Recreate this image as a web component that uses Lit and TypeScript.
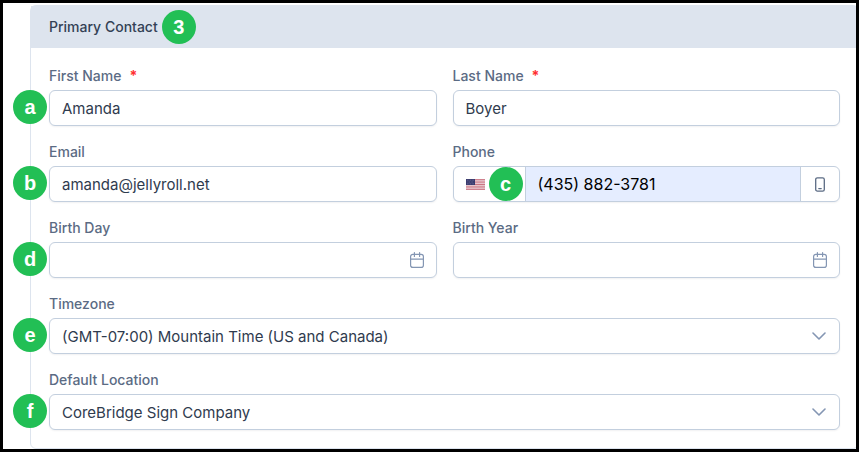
import { LitElement, html, css, svg, nothing } from "lit";
import { customElement, property } from "lit/decorators.js";

const chevron = svg`<svg class="chevron" width="14" height="8" viewBox="0 0 14 8" fill="none" stroke="currentColor" stroke-width="1.6" stroke-linecap="round" stroke-linejoin="round" aria-hidden="true"><path d="M1 1l6 6 6-6"/></svg>`;

const calendar = svg`<svg width="14" height="16" viewBox="0 0 14 16" fill="none" stroke="currentColor" stroke-width="1.2" stroke-linecap="round" aria-hidden="true"><rect x=".6" y="2.3" width="12.8" height="13.1" rx="2.2"/><path d="M.8 7.2h12.4M4.4.6v3.8M9.6.6v3.8"/></svg>`;

const mobile = svg`<svg width="10" height="15" viewBox="0 0 10 15" fill="none" stroke="currentColor" stroke-width="1.3" stroke-linecap="round" aria-hidden="true"><rect x=".7" y=".8" width="8.6" height="13.3" rx="1.7"/><path d="M3.8 11.6h2.4"/></svg>`;

const flag = svg`<svg width="19" height="11" viewBox="0 0 19 11" role="img" aria-label="United States"><rect width="19" height="11" fill="#f3e9ec"/><path d="M0 .4h19M0 2.1h19M0 3.8h19M0 5.5h19M0 7.2h19M0 8.9h19M0 10.6h19" stroke="#c4606f" stroke-width=".85"/><rect width="9" height="6" fill="#3a3b6e"/><path d="M1 1.2h7M1.6 3h6M1 4.8h7" stroke="#8f90b4" stroke-width=".6" stroke-dasharray=".7 .9"/></svg>`;

@customElement("step-badge")
export class StepBadge extends LitElement {
  static styles = css`
    :host {
      display: inline-flex;
      align-items: center;
      justify-content: center;
      width: 34px;
      height: 34px;
      border-radius: 50%;
      background: #22bf55;
      color: #fff;
      font: 700 20px/34px "Liberation Sans", Arial, sans-serif;
    }
  `;
  render() {
    return html`<slot></slot>`;
  }
}

@customElement("form-field")
export class FormField extends LitElement {
  @property() label = "";
  @property() kind: "text" | "date" | "select" | "phone" = "text";
  @property() value = "";
  @property() step = "";
  @property({ type: Boolean }) required = false;

  static styles = css`
    :host {
      display: block;
      min-width: 0;
    }
    * {
      box-sizing: border-box;
    }
    .label {
      display: flex;
      gap: 8px;
      margin-bottom: 4px;
      color: #5b6b84;
      font-size: 14px;
      font-weight: 500;
      line-height: 20px;
    }
    .star {
      color: #ff3030;
      font-weight: 700;
    }
    .control {
      position: relative;
      display: flex;
      height: 36px;
      border: 1px solid #c3cfde;
      border-radius: 6px;
      background: #fff;
      box-shadow: 0 1px 2px rgba(15, 23, 42, 0.06);
    }
    .input {
      flex: 1;
      width: 100%;
      min-width: 0;
      margin: 0;
      padding: 0 12px;
      border: 0;
      border-radius: 5px;
      outline: none;
      appearance: none;
      background: transparent;
      color: #2f3b4e;
      font: inherit;
      font-size: 15px;
    }
    .button {
      display: flex;
      align-items: center;
      justify-content: center;
      width: 38px;
      margin: 0;
      padding: 0;
      border: 0;
      background: transparent;
      color: #8496b3;
    }
    .chevron {
      position: absolute;
      top: 13px;
      right: 13px;
      color: #8496b3;
      pointer-events: none;
    }
    .country {
      justify-content: flex-start;
      width: 71px;
      padding-left: 12px;
    }
    .tel {
      border-left: 1px solid #c3cfde;
      border-right: 1px solid #c3cfde;
      border-radius: 0;
      background: #e5edff;
      color: #000;
      font-size: 16px;
    }
    .device {
      color: #5b6b84;
    }
    .badge {
      position: absolute;
      top: -1px;
      left: -37px;
    }
    .badge.inside {
      top: 0;
      left: 35px;
    }
  `;

  private renderControl() {
    switch (this.kind) {
      case "select":
        return html`<select id="field" class="input"><option>${this.value}</option></select>${chevron}`;
      case "date":
        return html`<input id="field" class="input" type="text" .value=${this.value} />
          <button class="button" type="button" aria-label="Open calendar">${calendar}</button>`;
      case "phone":
        return html`<button class="button country" type="button" aria-label="Country">${flag}</button>
          <input id="field" class="input tel" type="tel" .value=${this.value} />
          <button class="button device" type="button" aria-label="Phone type">${mobile}</button>`;
      default:
        return html`<input id="field" class="input" type="text" .value=${this.value} ?required=${this.required} />`;
    }
  }

  render() {
    return html`
      <label class="label" for="field">
        <span>${this.label}</span>${this.required ? html`<span class="star">*</span>` : nothing}
      </label>
      <div class="control">
        ${this.renderControl()}
        ${this.step
          ? html`<step-badge class=${this.kind === "phone" ? "badge inside" : "badge"}>${this.step}</step-badge>`
          : nothing}
      </div>
    `;
  }
}

@customElement("app-root")
export class AppRoot extends LitElement {
  static styles = css`
    :host {
      display: block;
      box-sizing: border-box;
      min-height: 100vh;
      padding: 2px 0 0 27px;
      overflow: hidden;
      border: 3px solid #000;
      background: #fff;
      font-family: Inter, "Liberation Sans", sans-serif;
    }
    .card {
      margin-right: -3px;
      border: 1px solid #dde4ee;
      border-radius: 6px;
    }
    .header {
      display: flex;
      align-items: center;
      gap: 4px;
      height: 42px;
      padding: 0 18px;
      background: #dde4ee;
    }
    .title {
      margin: 0;
      color: #334155;
      font-size: 14px;
      font-weight: 500;
      line-height: 20px;
    }
    .body {
      display: grid;
      grid-template-columns: 1fr 1fr;
      gap: 16px;
      padding: 18px;
    }
    .wide {
      grid-column: 1 / -1;
    }
  `;

  render() {
    return html`
      <section class="card">
        <header class="header">
          <h2 class="title">Primary Contact</h2>
          <step-badge>3</step-badge>
        </header>
        <form class="body">
          <form-field label="First Name" value="Amanda" step="a" required></form-field>
          <form-field label="Last Name" value="Boyer" required></form-field>
          <form-field label="Email" value="amanda@jellyroll.net" step="b"></form-field>
          <form-field label="Phone" kind="phone" value="(435) 882-3781" step="c"></form-field>
          <form-field label="Birth Day" kind="date" step="d"></form-field>
          <form-field label="Birth Year" kind="date"></form-field>
          <form-field class="wide" label="Timezone" kind="select" value="(GMT-07:00) Mountain Time (US and Canada)" step="e"></form-field>
          <form-field class="wide" label="Default Location" kind="select" value="CoreBridge Sign Company" step="f"></form-field>
        </form>
      </section>
    `;
  }
}
